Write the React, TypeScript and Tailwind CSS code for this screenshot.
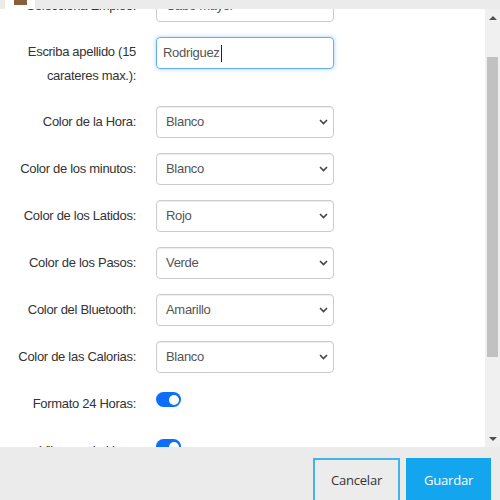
import { useEffect, useRef } from "react";

const colores = [
  { label: "Color de la Hora:", value: "Blanco" },
  { label: "Color de los minutos:", value: "Blanco" },
  { label: "Color de los Latidos:", value: "Rojo" },
  { label: "Color de los Pasos:", value: "Verde" },
  { label: "Color del Bluetooth:", value: "Amarillo" },
  { label: "Color de las Calorias:", value: "Blanco" },
];

function Chevron() {
  return (
    <svg width="9" height="6" viewBox="0 0 9 6">
      <path d="M1 1l3.5 3.5L8 1" fill="none" stroke="#444" strokeWidth="1.6" />
    </svg>
  );
}

function SelectBox({ value }: { value: string }) {
  return (
    <div className="flex h-[32px] w-[178px] items-center justify-between rounded-[4px] border border-[#ccc] bg-white pl-[9px] pr-[5px] text-[#555] shadow-[inset_0_1px_1px_rgba(0,0,0,0.075)]">
      <span>{value}</span>
      <Chevron />
    </div>
  );
}

function Row({ label, children }: { label: string; children: React.ReactNode }) {
  return (
    <div className="mb-[15px] flex h-[32px] items-center">
      <div className="w-[136px] whitespace-nowrap text-right text-[#333]">{label}</div>
      <div className="ml-[20px]">{children}</div>
    </div>
  );
}

function Toggle() {
  return (
    <div className="flex h-[15px] w-[25px] items-center justify-end rounded-full bg-[#0d6efd] pr-[2px]">
      <div className="h-[10px] w-[10px] rounded-full bg-white" />
    </div>
  );
}

function ToggleRow({ label }: { label: string }) {
  return (
    <div className="mb-[15px] flex h-[32px] items-center">
      <div className="w-[136px] whitespace-nowrap text-right text-[#333]">{label}</div>
      <div className="ml-[20px] self-start pt-[4px]">
        <Toggle />
      </div>
    </div>
  );
}

function Scrollbar() {
  return (
    <div className="flex w-[15px] flex-col bg-[#f0f0f0]">
      <div className="flex h-[17px] items-center justify-center">
        <div className="h-0 w-0 border-x-[4px] border-b-[4px] border-x-transparent border-b-[#505050]" />
      </div>
      <div className="flex-1">
        <div className="mx-[2px] mt-[31px] h-[300px] w-[11px] bg-[#c1c1c1]" />
      </div>
      <div className="flex h-[17px] items-center justify-center">
        <div className="h-0 w-0 border-x-[4px] border-t-[4px] border-x-transparent border-t-[#505050]" />
      </div>
    </div>
  );
}

export default function App() {
  const scrollRef = useRef<HTMLDivElement>(null);
  const apellidoRef = useRef<HTMLDivElement>(null);

  useEffect(() => {
    // keep the apellido field near the top of the form panel
    if (scrollRef.current && apellidoRef.current) {
      scrollRef.current.scrollTop = apellidoRef.current.offsetTop - 28;
    }
  }, []);

  return (
    <div className="flex h-[500px] w-[500px] flex-col overflow-hidden bg-[#ebebeb] font-['Liberation_Sans',Arial,sans-serif] text-[13px] tracking-[-0.3px]">
      {/* modal header strip */}
      <div className="flex h-[9px] shrink-0 items-start bg-[#ebebeb]">
        <div className="ml-[5px] h-[9px] w-[30px] bg-white pl-[9px]">
          <div className="h-[5px] w-[13px] bg-[#8a5d3d]" />
        </div>
      </div>

      <div className="flex min-h-0 flex-1">
        <div ref={scrollRef} className="relative flex-1 overflow-hidden bg-white">
          <div className="pt-[20px] pb-[40px]">
            <Row label="Escriba nombre:">
              <div className="flex h-[32px] w-[178px] items-center rounded-[4px] border border-[#ccc] pl-[9px] text-[#555]">
                Juan
              </div>
            </Row>
            <Row label="Selecciona Empleo:">
              <SelectBox value="Cabo mayor" />
            </Row>

            <div ref={apellidoRef} className="mb-[18px] flex items-start">
              <div className="w-[136px] pt-[3px] text-right leading-[24px] text-[#333]">
                Escriba apellido (15 carateres max.):
              </div>
              <div className="ml-[20px] flex h-[32px] w-[178px] items-center rounded-[4px] border border-[#66afe9] pl-[6px] text-[#555] shadow-[0_0_4px_rgba(102,175,233,0.6)]">
                <span>Rodriguez</span>
                <span className="ml-[1px] h-[17px] w-[1px] bg-[#222]" />
              </div>
            </div>

            {colores.map((c) => (
              <Row key={c.label} label={c.label}>
                <SelectBox value={c.value} />
              </Row>
            ))}

            <ToggleRow label="Formato 24 Horas:" />
            <ToggleRow label="Vibrar cada Hora:" />
          </div>
        </div>
        <Scrollbar />
      </div>

      {/* footer actions */}
      <div className="flex h-[53px] shrink-0 items-start justify-end gap-[6px] pt-[11px] pr-[9px] font-['Open_Sans',sans-serif] text-[13px] tracking-[-0.2px]">
        <button className="h-[46px] w-[87px] shrink-0 border-2 border-[#45b3ea] bg-[#ececec] text-[#333]">
          Cancelar
        </button>
        <button className="h-[46px] w-[85px] shrink-0 bg-[#13a6ee] text-white">
          Guardar
        </button>
      </div>
    </div>
  );
}
